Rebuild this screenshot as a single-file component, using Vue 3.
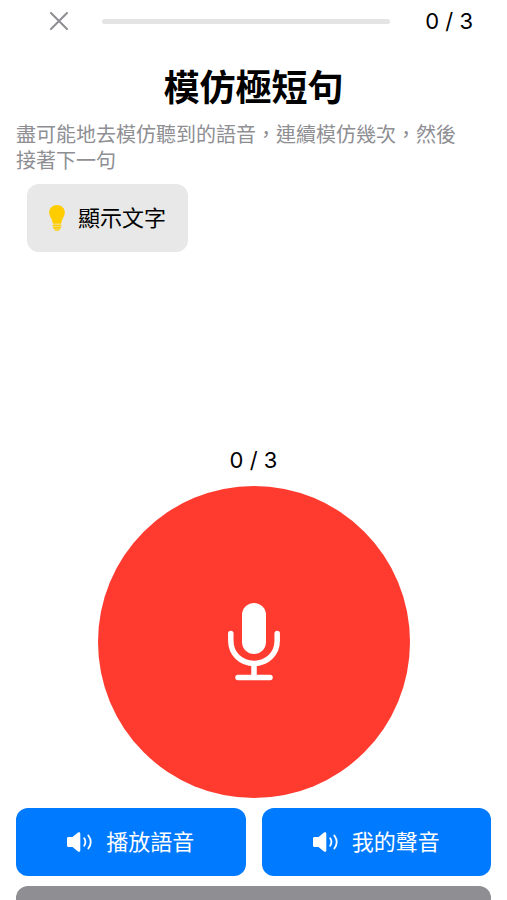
<!-- 跟讀練習頁 -->
<template>
  <main class="practice">
    <header class="top-bar">
      <button class="close" type="button" aria-label="關閉">
        <svg width="18" height="18" viewBox="0 0 18 18" fill="none" stroke="currentColor" stroke-width="2" stroke-linecap="round">
          <path d="M1 1 17 17M17 1 1 17" />
        </svg>
      </button>
      <div class="track" role="progressbar" aria-label="進度" :aria-valuenow="finished" aria-valuemin="0" :aria-valuemax="total">
        <div class="track-fill" :style="{ width: percent + '%' }"></div>
      </div>
      <span class="counter">{{ finished }} / {{ total }}</span>
    </header>

    <h1 class="title">模仿極短句</h1>
    <p class="hint">盡可能地去模仿聽到的語音，連續模仿幾次，然後接著下一句</p>

    <section class="sentence">
      <button class="reveal" type="button">
        <svg width="16" height="26" viewBox="0 0 16 26" fill="#ffcc00">
          <path d="M8 0C3.500 0 .2 3.200.2 7.500c0 3.300 1.700 5 2.600 7.200.5 1.200.5 2.400.8 3.300.1.500.5.800 1 .8h6.800c.5 0 .9-.3 1-.8.3-.9.3-2.100.8-3.300.9-2.200 2.600-3.900 2.600-7.200C15.800 3.200 12.500 0 8 0Z" />
          <rect x="3.500" y="19.500" width="9" height="1.900" rx=".9" />
          <rect x="3.900" y="21.900" width="8.200" height="1.800" rx=".9" />
          <path d="M5 24.200h6c-.3 1-1.500 1.500-3 1.500s-2.700-.5-3-1.500Z" />
        </svg>
        <span>顯示文字</span>
      </button>
    </section>

    <section class="recorder">
      <span class="counter">{{ recorded }} / {{ total }}</span>
      <button class="record" type="button" aria-label="錄音">
        <svg width="52" height="78" viewBox="0 0 52 78" fill="none" stroke="#fff" stroke-width="5.500" stroke-linecap="round">
          <rect x="14" y="0" width="24" height="51" rx="12" fill="#fff" stroke="none" />
          <path d="M2.800 30.500v7C2.800 51 13 60.500 26 60.500S49.200 51 49.200 37.500v-7M26 61v13M10 74.500h32" />
        </svg>
      </button>
    </section>

    <div class="actions">
      <button v-for="label in playback" :key="label" class="action" type="button">
        <svg width="26" height="20" viewBox="0 0 26 20">
          <path d="M1.500 5.100h4L11 .6c.9-.8 2.300-.4 2.300.8v17.200c0 1.200-1.400 1.600-2.300.8l-5.500-4.500h-4C.6 14.900 0 14.300 0 13.400V6.600c0-.9.6-1.500 1.500-1.500Z" fill="#fff" />
          <path d="M17.200 6.300c1.500 2.300 1.500 5.100 0 7.400M21.300 3.500c3 4 3 9 0 13" fill="none" stroke="#fff" stroke-width="1.800" stroke-linecap="round" />
        </svg>
        <span>{{ label }}</span>
      </button>
      <button class="action next" type="button" aria-label="下一句"></button>
    </div>
  </main>
</template>

<script setup>
import { computed, ref } from "vue";

const total = 3;
const finished = ref(0);
const recorded = ref(0);
const percent = computed(() => (finished.value / total) * 100);

const playback = ["播放語音", "我的聲音"];
</script>

<style>
body {
  margin: 0;
  background: #fff;
}
</style>

<style scoped>
.practice {
  box-sizing: border-box;
  padding: 0 16px 16px;
  color: #000;
  font-family: Inter, "Noto Sans CJK TC", sans-serif;
}

button {
  border: 0;
  margin: 0;
  padding: 0;
  font: inherit;
  cursor: pointer;
}

svg {
  display: block;
  flex: none;
}

.top-bar {
  display: flex;
  align-items: center;
  height: 42px;
  padding: 0 18px 0 32px;
}

.close {
  padding: 2px;
  background: none;
  color: #8e8e93;
}

.track {
  flex: 1;
  height: 5px;
  margin: 0 35px 0 32px;
  border-radius: 3px;
  background: #e4e4e5;
  overflow: hidden;
}

.track-fill {
  height: 100%;
  background: #007aff;
}

.counter {
  font-size: 22px;
  line-height: 28px;
}

.title {
  margin: 20px 0 8px;
  font-size: 36px;
  font-weight: 700;
  line-height: 52px;
  text-align: center;
}

.hint {
  margin: 0;
  padding-right: 24px;
  color: #8e8e93;
  font-size: 20px;
  line-height: 26px;
}

.sentence {
  min-height: 262px;
  padding: 10px 11px 0;
}

.reveal {
  display: flex;
  align-items: center;
  gap: 13px;
  height: 68px;
  padding: 0 22px;
  border-radius: 12px;
  background: #e8e8e8;
  color: #000;
  font-size: 22px;
  line-height: 28px;
}

.recorder {
  display: flex;
  flex-direction: column;
  align-items: center;
  gap: 12px;
}

.record {
  display: flex;
  align-items: center;
  justify-content: center;
  width: 100%;
  max-width: 312px;
  aspect-ratio: 1;
  border-radius: 50%;
  background: #ff3b30;
}

.actions {
  display: grid;
  grid-template-columns: 1fr 1fr;
  gap: 10px 16px;
  margin-top: 10px;
}

.action {
  display: flex;
  align-items: center;
  justify-content: center;
  gap: 13px;
  height: 68px;
  border-radius: 12px;
  background: #007aff;
  color: #fff;
  font-size: 22px;
  line-height: 28px;
}

.next {
  grid-column: 1 / -1;
  background: #8e8e93;
}
</style>
